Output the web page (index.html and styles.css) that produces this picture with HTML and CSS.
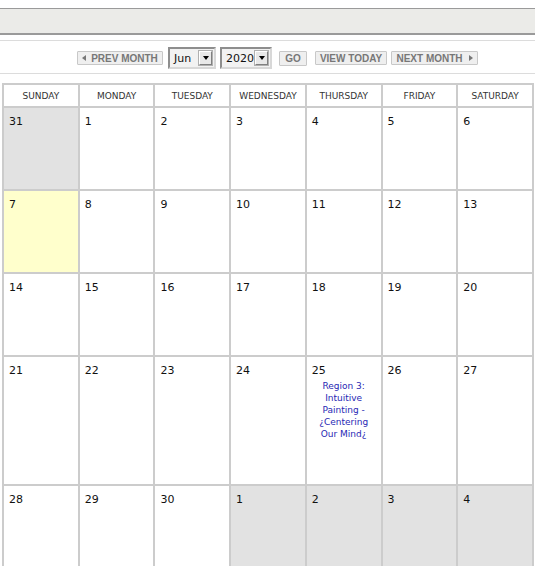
FILE: index.html
```html
<!DOCTYPE html>
<html>
<head>
<meta charset="utf-8">
<link rel="stylesheet" href="styles.css">
</head>
<body>
<div class="topbar"></div>
<div class="rule"></div>
<div class="nav">
  <span class="btn prev"><span class="tri-l"></span>PREV MONTH</span>
  <span class="sel sel-m"><span class="val">Jun</span><span class="arr"><span class="tri-d"></span></span></span>
  <span class="sel sel-y"><span class="val">2020</span><span class="arr"><span class="tri-d"></span></span></span>
  <span class="btn go">GO</span>
  <span class="btn today">VIEW TODAY</span>
  <span class="btn next">NEXT MONTH<span class="tri-r"></span></span>
</div>
<div class="rule rule2"></div>
<table class="cal">
  <tr class="head">
    <th>SUNDAY</th><th>MONDAY</th><th>TUESDAY</th><th>WEDNESDAY</th><th>THURSDAY</th><th>FRIDAY</th><th>SATURDAY</th>
  </tr>
  <tr>
    <td class="other">31</td><td>1</td><td>2</td><td>3</td><td>4</td><td>5</td><td>6</td>
  </tr>
  <tr>
    <td class="today-cell">7</td><td>8</td><td>9</td><td>10</td><td>11</td><td>12</td><td>13</td>
  </tr>
  <tr>
    <td>14</td><td>15</td><td>16</td><td>17</td><td>18</td><td>19</td><td>20</td>
  </tr>
  <tr class="tall">
    <td>21</td><td>22</td><td>23</td><td>24</td>
    <td>25<div class="event">Region 3: Intuitive Painting - ¿Centering Our Mind¿</div></td>
    <td>26</td><td>27</td>
  </tr>
  <tr>
    <td>28</td><td>29</td><td>30</td><td class="other">1</td><td class="other">2</td><td class="other">3</td><td class="other">4</td>
  </tr>
</table>
</body>
</html>
```
FILE: styles.css
```css
html, body {
  margin: 0;
  padding: 0;
  background: #fff;
}
body {
  padding-top: 8px;
  font-family: "DejaVu Sans", Verdana, sans-serif;
}
.topbar {
  height: 24px;
  background: #ebebe8;
  border-top: 1px solid #9a9a9a;
  border-bottom: 2px solid #9a9a9a;
}
.rule {
  margin-top: 5px;
  border-top: 1px solid #dcdcdc;
}
.rule2 {
  margin-top: 0;
}
.nav {
  display: flex;
  align-items: center;
  justify-content: center;
  padding: 6px 0 4px 20px;
  height: 22px;
  font-family: "Liberation Sans", Arial, sans-serif;
}
.btn {
  display: inline-flex;
  align-items: center;
  justify-content: center;
  box-sizing: border-box;
  height: 14px;
  border: 1px solid #c8c8c8;
  border-radius: 1px;
  background: #efefef;
  color: #777;
  font-weight: bold;
  font-size: 10px;
  padding: 0 3px;
  white-space: nowrap;
}
.prev { width: 86px; }
.go { width: 28px; margin-left: 7px; margin-top: 1px; height: 15px; }
.today { width: 72px; margin-left: 8px; }
.next { width: 87px; margin-left: 4px; }
.tri-l {
  display: inline-block;
  width: 0; height: 0;
  border-top: 3px solid transparent;
  border-bottom: 3px solid transparent;
  border-right: 4px solid #777;
  margin-right: 5px;
}
.tri-r {
  display: inline-block;
  width: 0; height: 0;
  border-top: 3px solid transparent;
  border-bottom: 3px solid transparent;
  border-left: 4px solid #777;
  margin-left: 6px;
}
.sel {
  display: inline-flex;
  align-items: center;
  box-sizing: border-box;
  height: 22px;
  border: 2px solid;
  border-color: #8e8e8e #d8d8d8 #d8d8d8 #8e8e8e;
  background: #f2f2f2;
  padding: 0 2px 0 4px;
  font-family: "DejaVu Sans", Verdana, sans-serif;
  font-size: 11px;
  color: #111;
}
.sel-m { width: 48px; margin-left: 5px; }
.sel-y { width: 52px; margin-left: 4px; }
.sel .val { flex: 1; }
.arr {
  display: inline-flex;
  align-items: center;
  justify-content: center;
  box-sizing: border-box;
  width: 13px;
  height: 14px;
  border: 1px solid;
  border-color: #fff #808080 #808080 #fff;
  background: #e8e8e8;
  outline: 1px solid #b0b0b0;
}
.tri-d {
  display: inline-block;
  width: 0; height: 0;
  border-left: 3px solid transparent;
  border-right: 3px solid transparent;
  border-top: 4px solid #000;
}
.cal {
  margin: 9px 0 0 2px;
  width: 532px;
  table-layout: fixed;
  border-collapse: collapse;
  border: 2px solid #cccccc;
}
.cal th, .cal td {
  border: 2px solid #cccccc;
}
.cal th {
  height: 21px;
  padding: 0;
  font-weight: normal;
  font-size: 9px;
  color: #333;
  text-align: center;
  vertical-align: middle;
}
.cal td {
  height: 83px;
  box-sizing: border-box;
  padding: 7px 5px;
  vertical-align: top;
  font-size: 11px;
  color: #111;
}
.cal tr.tall td {
  height: 129px;
}
.cal td.other {
  background: #e2e2e2;
}
.cal td.today-cell {
  background: #ffffcc;
}
.event {
  margin-top: 3px;
  text-align: center;
  font-size: 9px;
  line-height: 12px;
  color: #2828b4;
}
```
